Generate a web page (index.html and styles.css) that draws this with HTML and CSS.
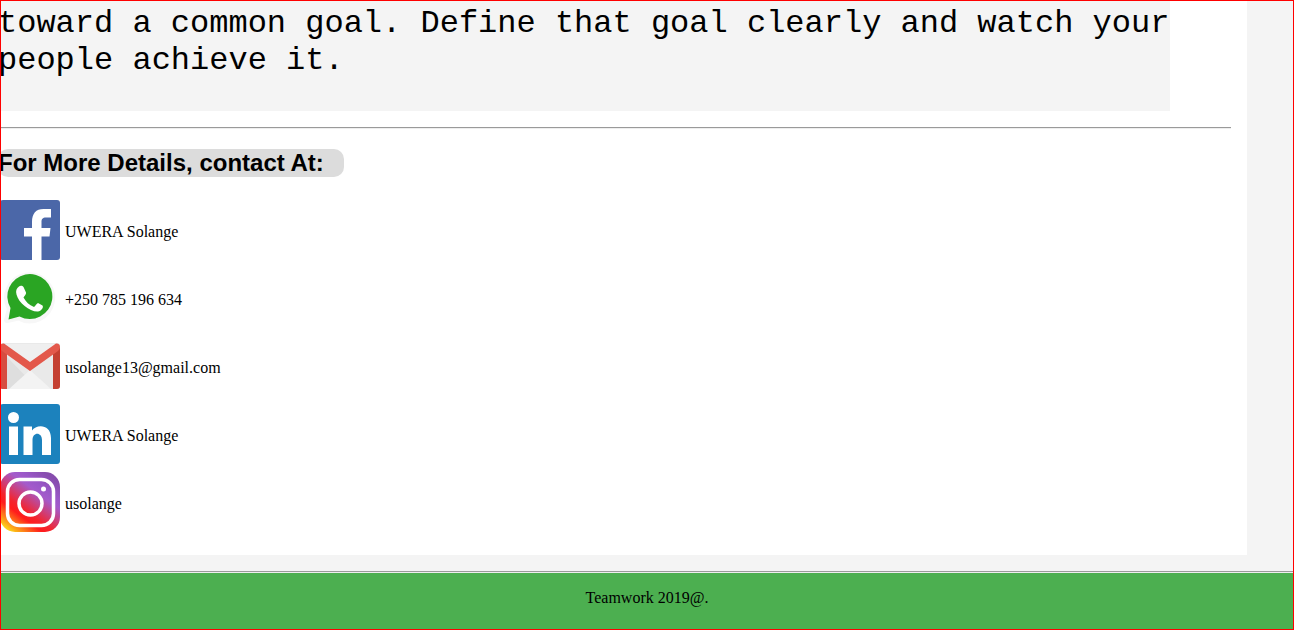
FILE: index.html
```html
<!DOCTYPE html>
<html lang="en">
<head>
<meta charset="utf-8">
<title>Teamwork</title>
<link rel="stylesheet" href="styles.css">
</head>
<body class="page">
<main class="panel">
  <p class="quote">toward a common goal. Define that goal clearly and watch your people achieve it.</p>
  <hr class="rule">
  <h2 class="heading">For More Details, contact At:</h2>
  <ul class="contacts">
    <li class="contact">
      <svg class="icon" viewBox="0 0 60 60" aria-hidden="true"><rect width="60" height="60" rx="3" fill="#4b67a8"/><path fill="#fff" d="M32 60V36.500H24V28H32V22C32 13.500 36 9 43.500 9H51V17.500H46C42.500 17.500 41.500 19 41.500 22V28H50.500L49.500 36.500H41.500V60Z"/></svg>
      <span class="label">UWERA Solange</span>
    </li>
    <li class="contact">
      <svg class="icon" viewBox="0 0 60 60" aria-hidden="true"><g transform="translate(-1 1)"><path d="M8 51 11 40A22.500 22.500 0 1 1 19.500 48.500Z" fill="#f7f7f7" stroke="#f7f7f7" stroke-width="6" stroke-linejoin="round"/><path d="M9.500 50.500 11.500 39A22.500 22.500 0 1 1 20.500 47.500Z" fill="#2aa523"/><path fill="#fff" d="M20 17.500C21 16.500 23.500 16.500 24.500 18L27 23.500C27.500 25 25.500 27 24.500 28.500C27 33 30 36 35 38C36.500 37 37.500 34.500 39 34L43.500 36.500C45 38.500 42 42 39 42.500C31 43 19.500 34 17.500 25.500C16.500 22 17.500 19 20 17.500Z"/></g></svg>
      <span class="label">+250 785 196 634</span>
    </li>
    <li class="contact">
      <svg class="icon" viewBox="0 0 60 60" aria-hidden="true"><rect y="7" width="60" height="46" rx="3" fill="#e9e9e9"/><path d="M6 20 38 53H6Z" fill="#dedede"/><path d="M30 34 9 53H51Z" fill="#f3f3f3"/><path d="M0 11 7 17V53H3Q0 53 0 50Z" fill="#d74c40"/><path d="M60 11 53 17V53H57Q60 53 60 50Z" fill="#c44032"/><path d="M4 8H56L30 27Z" fill="#efefef"/><path d="M0 11Q0 7 4 7.500L30 26 56 7.500Q60 7 60 11Q60 13 58 15L30 35 2 15Q0 13 0 11Z" fill="#e3584b"/></svg>
      <span class="label">usolange13@gmail.com</span>
    </li>
    <li class="contact">
      <svg class="icon" viewBox="0 0 60 60" aria-hidden="true"><rect width="60" height="60" rx="3" fill="#1c82bd"/><circle cx="13.500" cy="13.500" r="5.500" fill="#fff"/><path fill="#fff" d="M9 22.500H18V51H9ZM23.500 22.500H32V26.500C36 20 51 19.500 51 34V51H42V36C42 27.500 32.500 27.500 32.500 36V51H23.500Z"/></svg>
      <span class="label">UWERA Solange</span>
    </li>
    <li class="contact">
      <svg class="icon" viewBox="0 0 60 60" aria-hidden="true"><defs><linearGradient id="insta" x1="0" y1="1" x2=".75" y2="0"><stop offset="0" stop-color="#ffec19"/><stop offset=".1" stop-color="#fccb18"/><stop offset=".34" stop-color="#ff1c1c"/><stop offset=".43" stop-color="#f4242c"/><stop offset=".72" stop-color="#a45bcb"/><stop offset=".82" stop-color="#9a58c8"/><stop offset="1" stop-color="#864cad"/></linearGradient></defs><rect width="60" height="60" rx="15" fill="url(#insta)"/><g fill="none" stroke="#fff"><rect x="7.500" y="7.500" width="46" height="46" rx="12" stroke-width="3.500"/><circle cx="30.500" cy="31.500" r="11.500" stroke-width="3.500"/></g><circle cx="43.500" cy="17" r="2.500" fill="#fff"/></svg>
      <span class="label">usolange</span>
    </li>
  </ul>
</main>
<hr class="rule">
<footer class="footer">Teamwork 2019@.</footer>
</body>
</html>
```
FILE: styles.css
```css
* {
  box-sizing: border-box;
}

.page {
  display: flex;
  flex-direction: column;
  min-height: 100vh;
  margin: 0;
  border: 1px solid #f00;
  background: #f4f4f4;
  color: #000;
  font: 16px/20px "Liberation Serif", "Times New Roman", serif;
  overflow-x: hidden;
}

.panel {
  margin: 0 46px 16px -3px;
  padding: 0 16px 19px 0;
  background: #fff;
}

.quote {
  margin: 0 61px 16px 0;
  padding: 4px 0 32px;
  background: #f4f4f4;
  font: 32px/37px "Liberation Mono", "Courier New", monospace;
}

.rule {
  width: 100%;
  height: 2px;
  margin: 0;
  border: 0;
  border-top: 1px solid #9a9a9a;
  background: #eee;
}

.heading {
  width: fit-content;
  margin: 20px 0 19px;
  padding-right: 20px;
  border-radius: 10px;
  background: #dcdcdc;
  font: bold 24px/28px "Liberation Sans", Arial, sans-serif;
}

.contacts {
  margin: 0;
  padding: 0 0 0 2px;
  list-style: none;
}

.contact {
  display: flex;
  align-items: center;
  gap: 5px;
  height: 68px;
}

.icon {
  width: 60px;
  height: 60px;
}

.label {
  padding-top: 4px;
}

.footer {
  flex: 1;
  padding: 15px 16px 21px;
  background: #4caf50;
  text-align: center;
}
```
